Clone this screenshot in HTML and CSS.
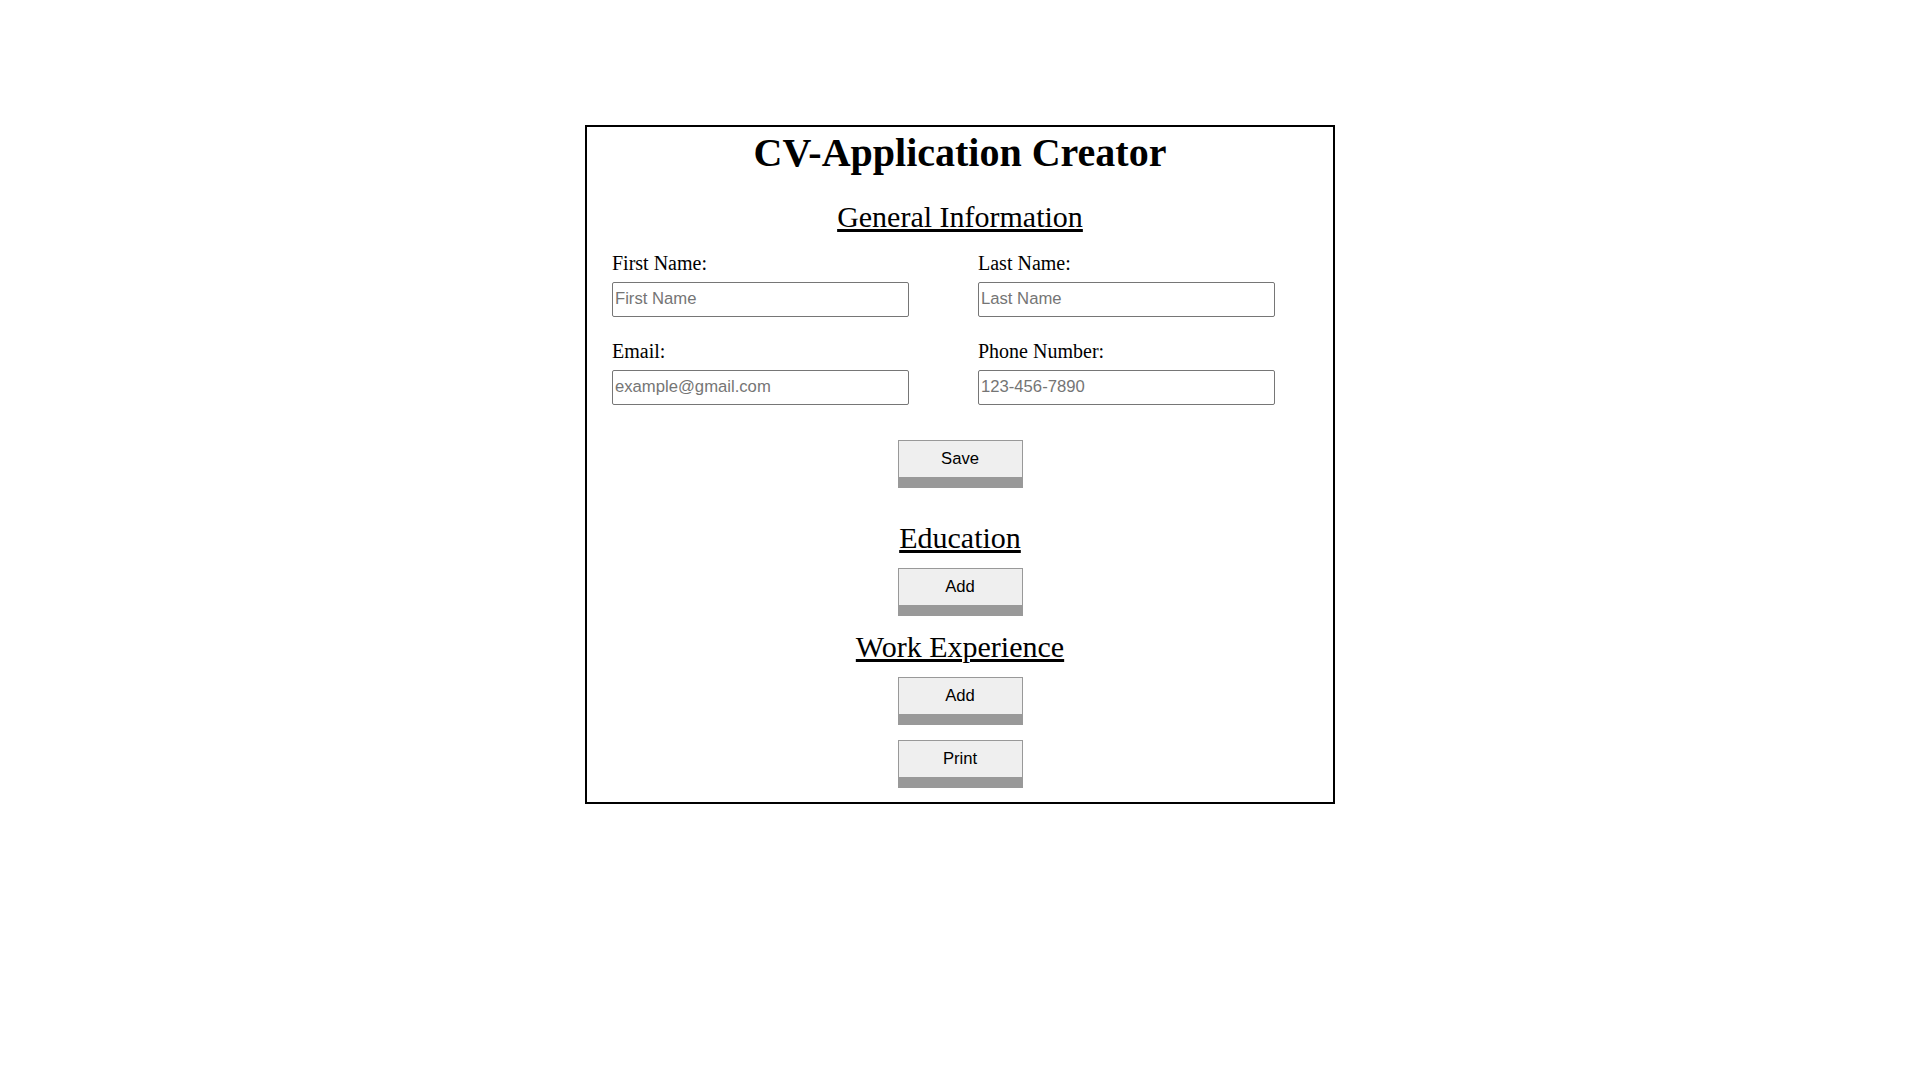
FILE: index.html
```html
<!DOCTYPE html>
<html lang="en">
<head>
<meta charset="utf-8">
<title>CV-Application Creator</title>
<link rel="stylesheet" href="styles.css">
</head>
<body>
<div class="app">
  <h1 class="title">CV-Application Creator</h1>

  <section class="section">
    <h2 class="section-title section-title--first">General Information</h2>
    <form class="info-grid">
      <div class="field">
        <label class="field-label" for="first">First Name:</label>
        <input class="field-input" id="first" type="text" placeholder="First Name">
      </div>
      <div class="field">
        <label class="field-label" for="last">Last Name:</label>
        <input class="field-input" id="last" type="text" placeholder="Last Name">
      </div>
      <div class="field">
        <label class="field-label" for="email">Email:</label>
        <input class="field-input" id="email" type="email" placeholder="example@gmail.com">
      </div>
      <div class="field">
        <label class="field-label" for="phone">Phone Number:</label>
        <input class="field-input" id="phone" type="tel" placeholder="123-456-7890">
      </div>
    </form>
    <button class="btn btn--save" type="button">Save</button>
  </section>

  <section class="section">
    <h2 class="section-title section-title--edu">Education</h2>
    <button class="btn btn--add" type="button">Add</button>
  </section>

  <section class="section">
    <h2 class="section-title section-title--work">Work Experience</h2>
    <button class="btn btn--add" type="button">Add</button>
  </section>

  <button class="btn btn--print" type="button">Print</button>
</div>
</body>
</html>
```

FILE: styles.css
```css
html, body {
  margin: 0;
  padding: 0;
  background: #ffffff;
}

body {
  font-family: "Liberation Serif", "Times New Roman", serif;
  font-size: 20px;
  color: #000000;
}

.app {
  width: 750px;
  box-sizing: border-box;
  margin: 125px auto 0;
  border: 2px solid #000000;
  padding: 3px 0 14px;
  display: flex;
  flex-direction: column;
  align-items: center;
}

.title {
  margin: 0;
  font-size: 40px;
  line-height: 46px;
  font-weight: bold;
  text-align: center;
}

.section {
  align-self: stretch;
  display: flex;
  flex-direction: column;
  align-items: center;
}

.section-title {
  margin: 0;
  font-size: 30px;
  line-height: 34px;
  font-weight: normal;
  text-decoration: underline;
}

.section-title--first { margin-top: 24px; }
.section-title--edu { margin-top: 33px; }
.section-title--work { margin-top: 14px; }

.info-grid {
  align-self: stretch;
  margin-top: 18px;
  padding-left: 25px;
  display: grid;
  grid-template-columns: 366px 366px;
  row-gap: 23px;
}

.field {
  display: flex;
  flex-direction: column;
  align-items: flex-start;
  gap: 7px;
}

.field-label {
  font-size: 20px;
  line-height: 23px;
}

.field-input {
  width: 297px;
  height: 35px;
  box-sizing: border-box;
  margin: 0;
  padding: 0 2px 1px;
  border: 1px solid #767676;
  border-radius: 2px;
  font-family: "Liberation Sans", Arial, sans-serif;
  font-size: 16.67px;
  color: #000000;
  background: #ffffff;
}

.field-input::placeholder {
  color: #757575;
  opacity: 1;
}

.btn {
  width: 125px;
  box-sizing: border-box;
  margin: 0;
  padding: 8px 0 9px;
  border: 1px solid #999999;
  border-bottom: 11px solid #999999;
  border-radius: 0;
  background: #efefef;
  font-family: "Liberation Sans", Arial, sans-serif;
  font-size: 16.67px;
  line-height: 19px;
  color: #000000;
  text-align: center;
}

.btn--save { margin-top: 35px; }
.btn--add { margin-top: 13px; }
.btn--print { margin-top: 15px; }
```
